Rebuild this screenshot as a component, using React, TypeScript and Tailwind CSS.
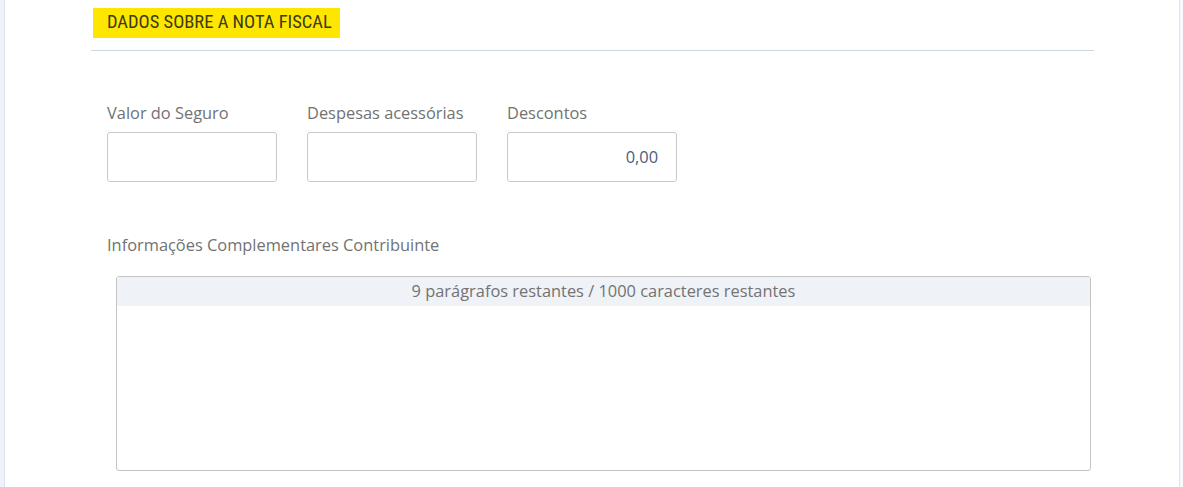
import React from "react";

const fields = [
  { label: "Valor do Seguro", value: "" },
  { label: "Despesas acessórias", value: "" },
  { label: "Descontos", value: "0,00" },
];

export default function App() {
  return (
    <div className="flex h-[487px] w-[1183px] overflow-hidden bg-white font-['Open_Sans','Lato',sans-serif]">
      <div className="w-[5px] shrink-0 border-r border-[#dde3ec] bg-[#eff3f9]" />
      <div className="flex-1 pl-[86px]">
        <div className="w-[1003px] border-b border-[#ccd5e0] pt-2 pb-3 pl-[2px]">
          <span className="inline-flex h-[30px] items-center bg-[#ffe600] pl-[14px] pr-[8px] font-['Liberation_Sans_Narrow','Roboto_Condensed','Liberation_Sans',sans-serif] text-[18.5px] text-[#3b3b14]">
            DADOS SOBRE A NOTA FISCAL
          </span>
        </div>

        <div className="mt-[52px] flex gap-[30px] pl-4">
          {fields.map((f) => (
            <div key={f.label} className="flex w-[170px] flex-col">
              <label className="mb-[9px] text-[16.4px] leading-5 text-[#727272]">{f.label}</label>
              <div className="flex h-[50px] items-center justify-end rounded-[3px] border border-[#c9c9c9] px-[18px] text-[16.4px] text-[#4c5d7c]">
                {f.value}
              </div>
            </div>
          ))}
        </div>

        <div className="mt-[53px] pl-4 text-[16.4px] leading-5 text-[#727272]">
          Informações Complementares Contribuinte
        </div>

        <div className="mt-[21px] ml-[25px] h-[195px] w-[975px] overflow-hidden rounded-[3px] border border-[#c4c4c4]">
          <div className="flex h-[29px] items-center justify-center bg-[#eff2f7] text-[16.4px] text-[#737373]">
            9 parágrafos restantes / 1000 caracteres restantes
          </div>
        </div>
      </div>
      <div className="w-[4px] shrink-0 border-l border-[#dde3ec] bg-[#f7f9fc]" />
    </div>
  );
}
